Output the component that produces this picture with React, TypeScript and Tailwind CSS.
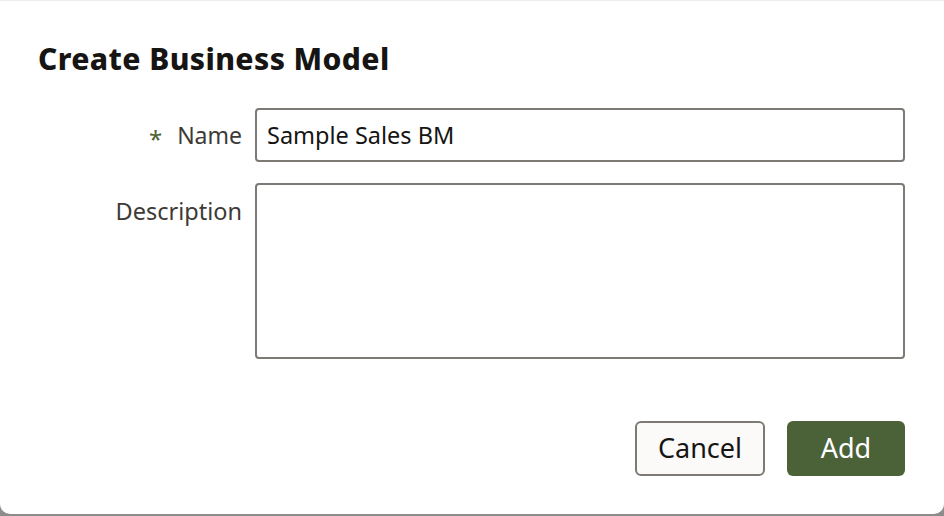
export default function App() {
	return (
		<div
			className="h-[516px] w-[944px] bg-[#8c8c8c]"
			style={{ fontFamily: '"Noto Sans", "Open Sans", sans-serif' }}
		>
			<div className="flex h-[514px] flex-col rounded-b-[10px] border-t border-[#ececec] bg-white">
				<h1 className="pl-[38px] pt-[38px] text-[30px] font-extrabold leading-[40px] tracking-[0.4px] text-[#161513]">
					Create Business Model
				</h1>

				<div className="mt-[29px] grid grid-cols-[204px_650px] gap-x-[13px] gap-y-[21px] pl-[38px]">
					<label className="flex items-center justify-end gap-[15px] text-[23px] text-[#3d3a37]">
						<span className="mt-[8px] text-[24px] leading-none text-[#4e6338]">*</span>
						<span>Name</span>
					</label>
					<input
						type="text"
						defaultValue="Sample Sales BM"
						className="h-[54px] rounded-[4px] border-2 border-[#7d7a76] bg-white px-[10px] text-[23.5px] text-[#161513] outline-none"
					/>

					<label className="flex justify-end pt-[11px] text-[23.5px] leading-[34px] text-[#3d3a37]">
						Description
					</label>
					<textarea className="h-[176px] resize-none rounded-[4px] border-2 border-[#7d7a76] bg-white px-[10px] py-[8px] text-[23.5px] text-[#161513] outline-none" />
				</div>

				<div className="mt-[62px] flex justify-end gap-[22px] pr-[39px]">
					<button
						type="button"
						className="h-[55px] w-[130px] rounded-[6px] border-2 border-[#7d7a76] bg-[#fbfaf8] text-[27px] text-[#161513]"
					>
						Cancel
					</button>
					<button
						type="button"
						className="h-[55px] w-[118px] rounded-[6px] bg-[#4b6138] text-[27px] text-white"
					>
						Add
					</button>
				</div>
			</div>
		</div>
	);
}
